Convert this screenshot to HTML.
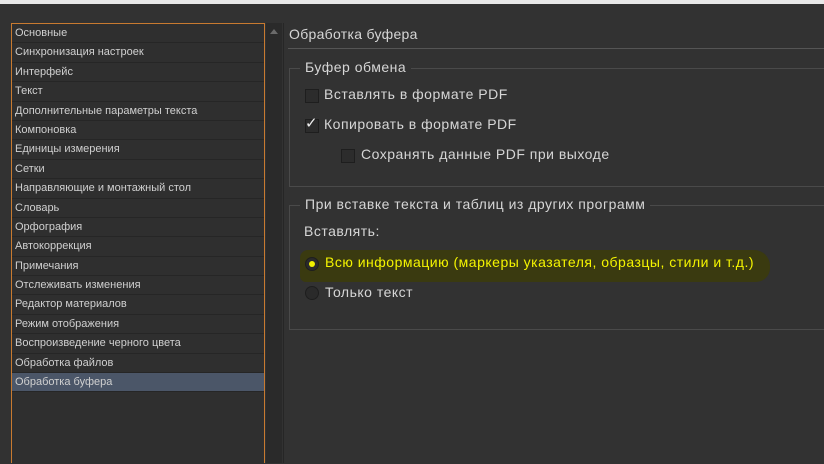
<!DOCTYPE html>
<html><head><meta charset="utf-8"><style>
body{margin:0;width:824px;height:460px;background:#323232;overflow:hidden;position:relative;font-family:"Liberation Sans","DejaVu Sans",sans-serif;color:#d6d6d6}
.top{position:absolute;left:0;top:0;width:824px;height:4px;background:#e8e8e8}
.list{position:absolute;left:12px;top:24px;width:252px;height:440px;background:#2f2f2f}
.row{height:18.4px;border-bottom:1px solid #262626;font-size:11px;line-height:18.4px;padding-left:3px;color:#d0d0d0;white-space:nowrap}
.sel{background:#4b5668}
.sb{position:absolute;left:266px;top:23px;width:16px;height:440px;background:#2a2a2a}
.sb:before{content:"";position:absolute;left:4px;top:6px;border-left:4px solid transparent;border-right:4px solid transparent;border-bottom:5px solid #6a6a6a}
.t{position:absolute;font-size:14px;letter-spacing:0.5px;white-space:nowrap}
.grp{position:absolute;border:1px solid #4a4a4a;border-right:none}
.leg{position:absolute;background:#323232;padding:0 5px;font-size:14px;letter-spacing:0.5px;top:-10px;white-space:nowrap}
.cb{position:absolute;width:12px;height:12px;background:#2c2c2c;border:1px solid #1e1e1e}
.rd{position:absolute;width:12px;height:12px;border-radius:50%;background:#2a2a2a;border:1px solid #1e1e1e}
</style></head><body>
<div class="top"></div>
<div class="list">
<div class="row">Основные</div><div class="row">Синхронизация настроек</div><div class="row">Интерфейс</div><div class="row">Текст</div><div class="row">Дополнительные параметры текста</div><div class="row">Компоновка</div><div class="row">Единицы измерения</div><div class="row">Сетки</div><div class="row">Направляющие и монтажный стол</div><div class="row">Словарь</div><div class="row">Орфография</div><div class="row">Автокоррекция</div><div class="row">Примечания</div><div class="row">Отслеживать изменения</div><div class="row">Редактор материалов</div><div class="row">Режим отображения</div><div class="row">Воспроизведение черного цвета</div><div class="row">Обработка файлов</div><div class="row sel">Обработка буфера</div>
</div>
<div style="position:absolute;left:11px;top:23px;width:1px;height:440px;background:#c87a30"></div>
<div style="position:absolute;left:264px;top:23px;width:1px;height:440px;background:#c87a30"></div>
<div style="position:absolute;left:11px;top:23px;width:254px;height:1px;background:#c87a30"></div>
<div class="sb"></div>
<div style="position:absolute;left:283px;top:23px;width:1px;height:440px;background:#262626"></div>
<div class="t" style="left:289px;top:26px;letter-spacing:0.3px">Обработка буфера</div>
<div style="position:absolute;left:288px;top:48px;width:536px;height:1px;background:#555"></div>
<div class="grp" style="left:289px;top:68px;width:535px;height:117px"><div class="leg" style="left:10px">Буфер обмена</div></div>
<div class="cb" style="left:305px;top:89px"></div>
<div class="t" style="left:324px;top:86px">Вставлять в формате PDF</div>
<div class="cb" style="left:305px;top:119px"></div>
<div class="t" style="left:305px;top:114px;font-size:15px;color:#eee">✓</div>
<div class="t" style="left:324px;top:116px">Копировать в формате PDF</div>
<div class="cb" style="left:341px;top:149px"></div>
<div class="t" style="left:361px;top:146px">Сохранять данные PDF при выходе</div>
<div class="grp" style="left:289px;top:205px;width:535px;height:123px"><div class="leg" style="left:10px">При вставке текста и таблиц из других программ</div></div>
<div class="t" style="left:304px;top:223px">Вставлять:</div>
<div style="position:absolute;left:300px;top:250px;width:470px;height:32px;background:#3a3a10;border-radius:8px 16px 14px 6px"></div>
<div class="rd" style="left:305px;top:257px"></div>
<div style="position:absolute;left:309px;top:261px;width:6px;height:6px;border-radius:50%;background:#f0f000"></div>
<div class="t" style="left:325px;top:254px;color:#f4f400">Всю информацию (маркеры указателя, образцы, стили и т.д.)</div>
<div class="rd" style="left:305px;top:286px"></div>
<div class="t" style="left:325px;top:284px">Только текст</div>
</body></html>
